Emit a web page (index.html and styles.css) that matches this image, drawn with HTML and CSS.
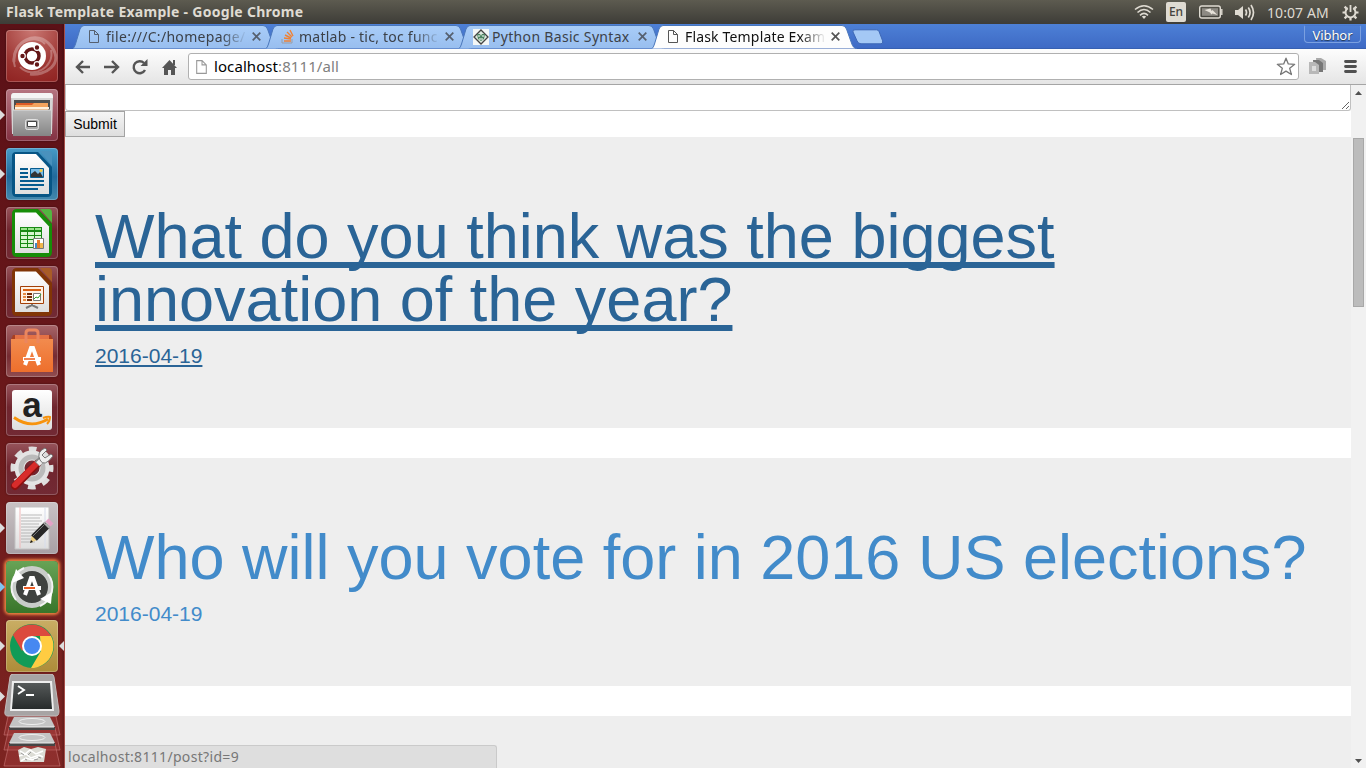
FILE: index.html
```html
<!DOCTYPE html>
<html lang="en">
<head>
<meta charset="utf-8">
<title>Flask Template Example</title>
<link rel="stylesheet" href="styles.css">
</head>
<body>
<svg class="defs" width="0" height="0">
  <defs>
    <linearGradient id="cab" x1="0" y1="0" x2="0" y2="1"><stop offset="0" stop-color="#b9b9b9"/><stop offset="1" stop-color="#858585"/></linearGradient>
    <linearGradient id="paper" x1="0" y1="0" x2="0" y2="1"><stop offset="0" stop-color="#fff"/><stop offset="1" stop-color="#dedede"/></linearGradient>
    <linearGradient id="bag" x1="0" y1="0" x2="0" y2="1"><stop offset="0" stop-color="#f28b4e"/><stop offset="1" stop-color="#ee6f2c"/></linearGradient>
    <linearGradient id="screen" x1="0" y1="0" x2="0" y2="1"><stop offset="0" stop-color="#555959"/><stop offset="1" stop-color="#272b2b"/></linearGradient>
    <linearGradient id="tabfill" x1="0" y1="0" x2="0" y2="1"><stop offset="0" stop-color="#a9cdf8"/><stop offset="1" stop-color="#98beef"/></linearGradient>
    <symbol id="page" viewBox="0 0 12 15"><path d="M1.500 1.500h5l4 4v8h-9z M6.500 1.500v4h4" fill="none" stroke="currentColor"/></symbol>
    <symbol id="x" viewBox="0 0 9 9"><path d="M.7.7l7.600 7.600M8.300.7L.7 8.300" stroke="currentColor" stroke-width="1.700"/></symbol>
    <symbol id="tab" viewBox="0 0 206 25"><path d="M0 24.500Q1.500 23.500 2.500 20L7 5Q8.500 1.500 11 1.500H190Q193 1.500 194.500 5L199.500 19Q201 24.500 205 24.500" stroke="#4a77bb"/></symbol>
  </defs>
</svg>
<header class="panel">
  <span class="title">Flask Template Example - Google Chrome</span>
  <div class="tray">
    <svg class="wifi" width="20" height="16" viewBox="0 0 20 16" fill="none" stroke="#dfdbd2" stroke-width="1.600"><path d="M1 5.500Q10-2 19 5.500M3.500 8.500Q10 2.500 16.500 8.500M6 11.300Q10 7.500 14 11.300"/><path d="M7.800 12.600L10 15l2.200-2.400Q10 11 7.800 12.600z" fill="#dfdbd2" stroke="none"/></svg>
    <span class="lang">En</span>
    <svg class="battery" width="24" height="14" viewBox="0 0 24 14"><rect x=".7" y="1" width="20.600" height="12" rx="2" fill="none" stroke="#dfdbd2" stroke-width="1.400"/><path d="M22.800 4v6" stroke="#dfdbd2" stroke-width="1.400"/><path d="M3 3.200h16v7.600H3z" fill="#8d8a83"/><path d="M5.500 5l6-1.500 1 2.500 1-1 5 5-5-1.500-1 1-1.500-2z" fill="#e7e3da"/></svg>
    <svg class="sound" width="20" height="17" viewBox="0 0 20 17" fill="none" stroke="#dfdbd2" stroke-width="1.700"><path d="M0 6h3l5-4v13l-5-4H0z" fill="#dfdbd2" stroke="none"/><path d="M10.500 5.500q2 3 0 6M13.300 3.500q3.500 5 0 10M16 1q5 7.500 0 15"/></svg>
    <span class="clock">10:07 AM</span>
    <svg class="gear" width="17" height="17" viewBox="0 0 17 17" fill="none" stroke="#dfdbd2"><path d="M5.800 4.200a5 5 0 1 0 5.400 0" stroke-width="2"/><path d="M8.500 1v7" stroke-width="1.800"/><path d="M.5 8.500h3M13.500 8.500h3M8.500 13.500v3M2.600 2.600l2 2M14.400 2.600l-2 2M2.600 14.400l2-2M14.400 14.400l-2-2" stroke-width="2.200"/></svg>
  </div>
</header>
<div class="desktop">
  <nav class="launcher">
    <div class="tile ubuntu"><svg viewBox="0 0 52 52"><g fill="none" stroke="#fff" opacity=".28"><path d="M8 32C6 12 31-2 45 16S39 46 24 44" stroke-width="3"/><path d="M9 37C2 14 28 2 39 14M45 20C49 37 27 50 14 37" stroke-width="2"/></g><circle cx="26" cy="26" r="14" fill="#fff"/><circle cx="26" cy="26" r="7" fill="none" stroke="#641717" stroke-width="3.500"/><g fill="#641717" stroke="#fff" stroke-width="1.200"><circle cx="16.500" cy="26" r="2.800"/><circle cx="31" cy="17.500" r="2.800"/><circle cx="31" cy="34.500" r="2.800"/></g></svg></div>
    <div class="tile files open"><svg viewBox="0 0 52 52"><path d="M5 7q0-3 3-3h36q3 0 3 3l-1 38H6z" fill="#d5d5d5"/><path d="M5 9q0-5 3-5h36q3 0 3 5z" fill="#f4f4f4"/><path d="M8 11h36v12H8z" fill="#4d4d4d"/><path d="M10 14h32v7H10z" fill="#dc5b26"/><path d="M9 16h17l2-2h14v7H9z" fill="#f4a35d"/><path d="M9 18h34v2H9z" fill="#fff0dc"/><path d="M7 21h38v26H7z" fill="url(#cab)"/><path d="M7 21h38" stroke="#dedede"/><rect x="19.500" y="30.500" width="13" height="10" rx="2" fill="#aaa" stroke="#e1e1e1"/><path d="M21.500 32.500h9v5h-9z" fill="#fff" stroke="#444"/></svg></div>
    <div class="tile writer open"><svg viewBox="0 0 52 52"><path d="M6 8q0-4 4-4h22l14 15v25q0 5-5 5H11q-5 0-5-5z" fill="#075585"/><path d="M34 3h9q3 0 3 4v11z" fill="#4991bd"/><path d="M9 6h21l13 14v26H9z" fill="url(#paper)"/><path d="M14 21h8M14 25h8M14 29h8M14 33h24M14 37h24M14 41h18" stroke="#075c8f" stroke-width="2"/><path d="M24.500 20.500h13v9h-13z" fill="#7bbce6" stroke="#075c8f"/><path d="M25 29v-3l4-3 3 3 2-2 3 5z" fill="#333"/><circle cx="35" cy="22.500" r="1.500" fill="#f7cc41"/></svg></div>
    <div class="tile office"><svg viewBox="0 0 52 52"><path d="M6 7q0-5 5-5h21l14 15v28q0 5-5 5H11q-5 0-5-5z" fill="#168d08"/><path d="M34 2h9q3 0 3 4v10z" fill="#53b540"/><path d="M9 5.500h21l13 14V46H9z" fill="url(#paper)"/><path d="M14 20h22v21H14z" fill="#188914"/><path d="M15 21h6v2h-6zm7 0h6v2h-6zm7 0h6v2h-6z" fill="#9ce48d"/><path d="M15 25h6v3h-6zm7 0h6v3h-6zm7 0h6v3h-6zM15 29h6v3h-6zm7 0h6v3h-6zm7 0h6v3h-6zM15 33h6v3h-6zm7 0h6v3h-6zM15 37h6v3h-6zm7 0h6v3h-6z" fill="#d6f6cf"/><path d="M27.500 31.500h10v10h-10z" fill="#fff" stroke="#777"/><path d="M29 36h2v5h-2z" fill="#438ac6"/><path d="M31 33h3v8h-3z" fill="#e57b2c"/><path d="M34 36h3v5h-3z" fill="#f0b84e"/></svg></div>
    <div class="tile office"><svg viewBox="0 0 52 52"><path d="M6 7q0-5 5-5h21l14 15v28q0 5-5 5H11q-5 0-5-5z" fill="#813506"/><path d="M34 2h9q3 0 3 4v10z" fill="#a95c27"/><path d="M9 5.500h21l13 14V46H9z" fill="url(#paper)"/><path d="M14.500 20.500h23v17h-23z" fill="#fff2e4" stroke="#a33f08"/><path d="M17 24h18" stroke="#d96213" stroke-width="2"/><path d="M17 28h3M17 31h3M17 34h3" stroke="#e78c44" stroke-width="2"/><path d="M21 28h5M21 31h5M21 34h5" stroke="#752c06" stroke-width="2"/><path d="M27.500 27.500h7v7h-7z" fill="#fff" stroke="#777"/><path d="M28 33l2-2 2 1 3-4" fill="none" stroke="#31a329"/><path d="M26 38v2M20 42l6-3 6 3" stroke="#777" stroke-width="2" fill="none"/></svg></div>
    <div class="tile shop"><svg viewBox="0 0 52 52"><path d="M7 10h38l2 5H5z" fill="#a83f21"/><path d="M9 10h34v5H9z" fill="#e47145"/><path d="M5 14h42v33H5z" fill="url(#bag)"/><path d="M20 18V8q0-3 3-3h6q3 0 3 3v10" fill="none" stroke="#eb865e" stroke-width="3"/><path d="M19 40l6-17h2l6 17" fill="none" stroke="#fff" stroke-width="4"/><path d="M17 34h18" stroke="#fff" stroke-width="4"/><path d="M18 34h11" stroke="#ee662b" stroke-width="1.600"/></svg></div>
    <div class="tile amazon"><svg viewBox="0 0 52 52"><rect x="6" y="6" width="40" height="40" rx="3" fill="url(#paper)"/><text x="26" y="33" class="amazon-a">a</text><path d="M8 33.500q17 12 34 1.500" fill="none" stroke="#f7930d" stroke-width="2.800"/><path d="M37 34q5-2 7-1 0 4-3 7" fill="none" stroke="#f7930d" stroke-width="2"/></svg></div>
    <div class="tile settings"><svg viewBox="0 0 52 52"><circle cx="26" cy="25" r="18.500" fill="none" stroke="#dedede" stroke-width="6" stroke-dasharray="7.530 7" stroke-dashoffset="3.700"/><circle cx="26" cy="25" r="12.500" fill="none" stroke="#e4e4e4" stroke-width="10"/><circle cx="26" cy="25" r="11" fill="none" stroke="#bababa" stroke-width="5"/><path d="M9 43L31 21" stroke="#8e1010" stroke-width="8" stroke-linecap="round"/><path d="M9 42L30 21" stroke="#d82c2b" stroke-width="6" stroke-linecap="round"/><path d="M31 21l6-6" stroke="#888" stroke-width="7"/><path d="M32 21l6-6" stroke="#eee" stroke-width="5"/><path d="M39 5q-9 4-5 12t13-4l-2-2-6 4-3-3 5-5z" fill="#eee" stroke="#777"/></svg></div>
    <div class="tile editor open"><svg viewBox="0 0 52 52"><path d="M9 5h34v42H9z" fill="url(#paper)" stroke="#c2c2c2"/><path d="M15 13h21M15 16h19M15 19h21M15 22h18M15 25h21M15 28h17M15 31h19M15 34h14M15 37h16M15 40h14" stroke="#aaa" stroke-width=".8"/><path d="M14 5v41" stroke="#efb8b8"/><path d="M39 5v41" stroke="#d6dceb"/><path d="M24 41l2-8 5 5z" fill="#ebce83"/><path d="M24 41l1-3 2 2z" fill="#111"/><path d="M28 36l13-13" stroke="#272727" stroke-width="8"/><path d="M40 24l2-2" stroke="#aaa" stroke-width="8"/><path d="M42 22l3-3" stroke="#e4a2c6" stroke-width="7"/><path d="M27 34l13-13" stroke="#777"/></svg></div>
    <div class="tile updater open blue"><svg viewBox="0 0 52 52"><circle cx="26" cy="26" r="18.500" fill="#3f423f" stroke="#c9ccc9" stroke-width="5"/><path d="M10 39A21 21 0 0 1 18 7M42 13a21 21 0 0 1-8 32" fill="none" stroke="#f3f3f3" stroke-width="2"/><path d="M10 8l-4 14 12-5zM46 31l-12 7 11 5z" fill="#fff"/><path d="M19 34l6-17h2l6 17" fill="none" stroke="#fff" stroke-width="4"/><path d="M17 27h18" stroke="#fff" stroke-width="4"/><path d="M18 27h11" stroke="#ed5d25" stroke-width="2"/></svg></div>
    <div class="tile chrome open current"><svg viewBox="0 0 52 52"><circle cx="26" cy="26" r="22" fill="#119b57"/><path d="M7 15A22 22 0 0 1 45 16H26L16 31z" fill="#dc4a3e"/><path d="M45 16A22 22 0 0 1 25 48l10-17-1-15z" fill="#ffcc42"/><circle cx="26" cy="26" r="10" fill="#fff"/><circle cx="26" cy="26" r="8" fill="#4688f1"/></svg></div>
    <div class="folded"><svg width="64" height="94" viewBox="0 0 64 94">
      <path d="M0 17.500l5 5-5 5z" fill="#ddd"/>
      <g fill="#b64a4a" fill-opacity=".3" stroke="#ca7777" stroke-opacity=".6"><path d="M9 38L4 61h56l-5-23z"/><path d="M9 54L4 76h56l-5-22z"/><path d="M9 70L4 92h56l-5-22z"/></g>
      <path d="M14 43h36l5 10H9z" fill="#c4c4c4"/><path d="M9 53h46v3H9z" fill="#454545"/><ellipse cx="32" cy="47.500" rx="13" ry="3" fill="none" stroke="#eee"/>
      <path d="M14 59h36l5 10H9z" fill="#c4c4c4"/><path d="M9 69h46v3H9z" fill="#454545"/><ellipse cx="32" cy="63.500" rx="13" ry="3" fill="none" stroke="#eee"/><path d="M10 53h44M10 69h44" stroke="#eee"/>
      <path d="M18 76l6-3 7 2 7-2 8 2-2 13H20z" fill="#dcdcd5"/><path d="M20 77l5 3 5-4 6 4 7-3M19 82l7-2 5 4 8-3 4 2M21 87l5-3 6 2 7-3" fill="none" stroke="#fff" stroke-width="1.500"/><path d="M21 79l3 2M31 78l-3 3M38 83l3 1M25 85l2 1M34 86l4-1" stroke="#999"/>
      <path d="M10 3q0-3 4-3h36q4 0 4 3l5 34q0 5-3 5H8q-4 0-3-5z" fill="#a7a4a4" stroke="#c3bbbb"/><path d="M12 7h40l2 30H10z" fill="#eee"/><path d="M14 9h36l2 26H12z" fill="url(#screen)"/><path d="M18 12l6 4-6 4M26 21h8" fill="none" stroke="#fff" stroke-width="1.900"/>
    </svg></div>
  </nav>
  <main class="window">
    <div class="tabstrip">
      <div class="tab"><svg class="shape" fill="url(#tabfill)"><use href="#tab"/></svg><svg class="favicon page"><use href="#page"/></svg><span class="label t1 fade">file:///C:/homepage/</span><svg class="close"><use href="#x"/></svg></div>
      <div class="tab"><svg class="shape" fill="url(#tabfill)"><use href="#tab"/></svg><svg class="favicon" width="14" height="16" viewBox="0 0 14 16" fill="none"><path d="M1 10v4h10v-4" stroke="#9a9da5"/><path d="M3 12h7M3 9l7 1M4 6l6 3M6 3l5 5M9 1l3 6" stroke="#ef8236" stroke-width="1.400"/></svg><span class="label t2 fade">matlab - tic, toc func</span><svg class="close"><use href="#x"/></svg></div>
      <div class="tab"><svg class="shape" fill="url(#tabfill)"><use href="#tab"/></svg><svg class="favicon python" width="16" height="16" viewBox="0 0 16 16"><path d="M0 0h16v16H0z" fill="#f3f6f5"/><path d="M8 1l7 7-7 7-7-7z" fill="#dce8de" stroke="#444" stroke-width="1.300"/><path d="M4 5h3l1 2 1-2h3l-1 5-3 2-3-2z" fill="#4a8360"/><path d="M5 7h2M9 7h2M6 10h4" stroke="#fff"/></svg><span class="label t3">Python Basic Syntax</span><svg class="close"><use href="#x"/></svg></div>
      <div class="tab active"><svg class="shape" fill="#fdfdfd"><use href="#tab"/></svg><svg class="favicon page"><use href="#page"/></svg><span class="label t4 fade">Flask Template Exam</span><svg class="close"><use href="#x"/></svg></div>
      <svg class="newtab" width="32" height="16" viewBox="0 0 32 16"><path d="M3 .8h21.500q2 0 2.700 2l3.400 9q.8 3-1.600 3H9q-3 0-4-3L1 3Q0 .8 3 .8z" fill="#a4c8f5" stroke="#3d67b5"/></svg>
      <span class="user">Vibhor</span>
    </div>
    <div class="toolbar">
      <svg class="tools" width="105" height="18" viewBox="0 0 105 18" fill="none" stroke="#555" stroke-width="2.400"><path d="M15 9H2.500M8 3L2 9l6 6M29 9h13.500M37 3l6 6-6 6"/><path d="M69 5A6 6 0 1 0 70 12"/><path d="M72.500 1v7h-7z" fill="#555" stroke="none"/><path d="M87 10l7.500-8 7.500 8h-2v7h-4v-5h-3v5h-4v-7zM98 2h2v5h-2z" fill="#555" stroke="none"/></svg>
      <div class="omnibox"><svg class="urlpage"><use href="#page"/></svg><span class="url"><b>localhost</b>:8111/all</span><svg class="star" width="20" height="19" viewBox="0 0 20 19"><path d="M10 1.200l2.300 5.700 6.400.4-5 4 1.700 6.200-5.400-3.400-5.400 3.400 1.700-6.200-5-4 6.400-.4z" fill="#fff" stroke="#777" stroke-width="1.300" stroke-linejoin="round"/></svg></div>
      <svg class="extension" width="18" height="17" viewBox="0 0 18 17"><path d="M7 0h5l5 3v9H8z" fill="#aaa"/><path d="M4 2h6l4 3v9H5z" fill="#777"/><path d="M0 4h6l4 3v9H0z" fill="#b8b8b8"/><path d="M3 8h4v5H3z" fill="#ddd"/></svg>
      <svg class="menu" width="13" height="13" viewBox="0 0 13 13"><path d="M1.500 1.500h10M1.500 6.500h10M1.500 11.500h10" stroke="#505050" stroke-width="2.800" stroke-linecap="round"/></svg>
    </div>
    <div class="viewport">
      <div class="document">
        <div class="textarea"><svg width="9" height="9" viewBox="0 0 9 9"><path d="M1 8l7-7M5 8l3-3" stroke="#555" stroke-width=".9"/></svg></div>
        <button class="submit">Submit</button>
        <a class="jumbotron hovered"><h1>What do you think was the biggest innovation of the year?</h1><p>2016-04-19</p></a>
        <a class="jumbotron"><h1>Who will you vote for in 2016 US elections?</h1><p>2016-04-19</p></a>
        <a class="jumbotron"></a>
      </div>
      <div class="scrollbar"><svg width="7" height="4" viewBox="0 0 7 4"><path d="M0 4l3.500-4L7 4z" fill="#505050"/></svg><i class="thumb"></i><svg class="down" width="7" height="4" viewBox="0 0 7 4"><path d="M0 0h7L3.500 4z" fill="#505050"/></svg></div>
      <div class="status"><span>localhost:8111/post?id=9</span></div>
    </div>
  </main>
</div>
</body>
</html>
```
FILE: styles.css
```css
* { box-sizing: border-box; }
body { margin: 0; width: 1366px; height: 768px; overflow: hidden; font-family: "Noto Sans", "Open Sans", sans-serif; }
svg { display: block; flex: none; }
.defs { position: absolute; }
.panel { height: 24px; display: flex; align-items: center; justify-content: space-between; padding: 0 7px 0 6px; background: linear-gradient(#5d5b50, #3d3c37); color: #dfdbd2; }
.title { font-size: 14px; font-weight: 700; letter-spacing: .28px; white-space: nowrap; line-height: 24px; }
.tray { display: flex; align-items: center; height: 24px; }
.lang { width: 20px; height: 20px; margin-left: 12px; border-radius: 2px; background: #dfdbd2; color: #45433e; font-size: 12px; font-weight: 500; line-height: 20px; text-align: center; }
.battery { margin-left: 13px; }
.sound { margin-left: 12px; }
.clock { width: 62px; margin-left: 12px; font-size: 14px; letter-spacing: .08px; white-space: nowrap; }
.gear { margin-left: 13px; }
.desktop { display: flex; height: 744px; }
.launcher { width: 65px; height: 744px; padding: 6px 0 0 6px; display: flex; flex-direction: column; gap: 7px; background: linear-gradient(90deg, #0000 61px, #0003 64px, #a64d48 64px), linear-gradient(#5b1117, #661619 40%, #7d2421); flex: none; }
.tile { position: relative; flex: none; width: 52px; height: 52px; border-radius: 4px; background: linear-gradient(#97545b, #70252e 45%, #722a34); box-shadow: inset 0 0 0 1px #ffffff38, 0 0 2px #0006; }
.tile svg { width: 52px; height: 52px; }
.ubuntu { background: radial-gradient(circle at 50% 0, #ca7873, #9c3431 65%, #8f2221); }
.files { background: linear-gradient(#b57480, #833142); }
.writer { background: linear-gradient(#479bc7, #216a9c 55%, #4287ad); }
.shop { background: linear-gradient(#a76568, #752b32 60%, #914d50); }
.editor { background: linear-gradient(#c9c2c4, #a8a0a4); }
.updater { background: linear-gradient(#68a356, #38752a); box-shadow: 0 0 3px 2px #eb8242; }
.chrome { background: linear-gradient(#c9ad64, #ad8c39); }
.open::before { content: ""; position: absolute; left: -6px; top: 21px; border-left: 5px solid #ddd; border-top: 5px solid transparent; border-bottom: 5px solid transparent; }
.blue::before { border-left-color: #7fc5f1; }
.current::after { content: ""; position: absolute; right: -6px; top: 21px; border-right: 5px solid #ddd; border-top: 5px solid transparent; border-bottom: 5px solid transparent; }
.amazon-a { font: 700 35px "Liberation Sans", Arial, sans-serif; fill: #222; text-anchor: middle; }
.folded { margin: -5px 0 0 -6px; }
.window { width: 1301px; display: flex; flex-direction: column; }
.tabstrip { height: 25px; flex: none; display: flex; background: linear-gradient(#4d80d6, #3e6ac5); border-bottom: 1px solid #3760b1; padding-left: 8px; }
.tab { position: relative; z-index: 1; width: 206px; height: 25px; flex: none; display: flex; align-items: center; padding-left: 15px; margin-right: -13px; color: #56606f; }
.active { z-index: 2; color: #555; }
.shape { position: absolute; left: 0; top: 0; z-index: -1; width: 206px; height: 25px; }
.favicon { flex: none; margin-right: 4px; }
.favicon.page { width: 12px; height: 15px; margin-right: 6px; }
.python { margin: 0 3px 0 -1px; }
.label { width: 141px; height: 22px; overflow: hidden; line-height: 22px; font-size: 14px; white-space: nowrap; color: #3c4148; flex: none; }
.active .label { color: #111; }
.fade { -webkit-mask-image: linear-gradient(90deg, #000 115px, transparent 141px); mask-image: linear-gradient(90deg, #000 115px, transparent 141px); }
.t1 { letter-spacing: .3px; }
.t2 { letter-spacing: .24px; }
.t3 { letter-spacing: .32px; }
.t4 { letter-spacing: .17px; }
.close { width: 9px; height: 9px; margin-left: 5px; }
.newtab { margin: 5px 0 0 7px; }
.user { width: 57px; height: 18px; margin: 1px 5px 0 auto; border: 1px solid #7ba0e0; border-top-color: #4978cd; border-radius: 2px 2px 4px 4px; color: #fff; font-size: 13px; letter-spacing: -.1px; line-height: 18px; text-align: center; text-shadow: 0 1px 1px #234; }
.toolbar { height: 36px; flex: none; display: flex; align-items: center; background: linear-gradient(#fdfdfd, #e5e5e5); border-bottom: 1px solid #a5a5a5; padding-left: 10px; }
.tools { margin-right: 8px; }
.omnibox { width: 1111px; height: 27px; display: flex; align-items: center; background: #fff; border: 1px solid #b0b0b0; border-radius: 3px; padding: 0 2px 0 6px; }
.urlpage { width: 13px; height: 16px; color: #999; }
.url { margin-left: 6px; font-size: 15px; letter-spacing: .08px; line-height: 25px; color: #808080; }
.url b { color: #000; font-weight: 400; }
.star { margin-left: auto; }
.extension { margin-left: 10px; }
.menu { margin-left: 17px; }
.viewport { position: relative; height: 683px; display: flex; background: #fff; }
.document { width: 1286px; height: 683px; overflow: hidden; }
.textarea { height: 26px; display: flex; justify-content: flex-end; align-items: flex-end; border: 1px solid #c0c0c0; border-top: 0; border-radius: 0 0 3px 3px; }
.submit { display: block; width: 60px; height: 26px; padding: 0; border: 1px solid #a3a3a3; background: linear-gradient(#f5f5f5, #dedede); font: 14px "Liberation Sans", Arial, sans-serif; color: #000; }
.jumbotron { display: block; min-height: 228px; margin-bottom: 30px; padding: 48px 30px; background: #eee; color: #428bca; font-family: "Liberation Sans", Arial, sans-serif; }
.jumbotron h1 { margin: 20px 0 10px; font-size: 63px; font-weight: 400; line-height: 63px; }
.jumbotron p { margin: 0 0 9px; font-size: 21px; line-height: 30px; }
.hovered { color: #2a6496; min-height: 291px; }
.hovered h1, .hovered p { text-decoration: underline; text-decoration-skip-ink: none; }
.scrollbar { width: 15px; height: 683px; display: flex; flex-direction: column; align-items: center; padding: 6px 0 5px; background: #f1f1f1; }
.thumb { width: 11px; height: 169px; margin-top: 43px; border: 1px solid #a8a8a8; background: #bcbcbc; }
.down { margin-top: auto; }
.status { position: absolute; left: 0; bottom: 0; width: 432px; height: 23px; padding-left: 3px; border: 1px solid #cacaca; border-width: 1px 1px 0 0; border-radius: 0 3px 0 0; background: #dedede; color: #777; font-size: 14px; letter-spacing: .32px; line-height: 22px; }
```
